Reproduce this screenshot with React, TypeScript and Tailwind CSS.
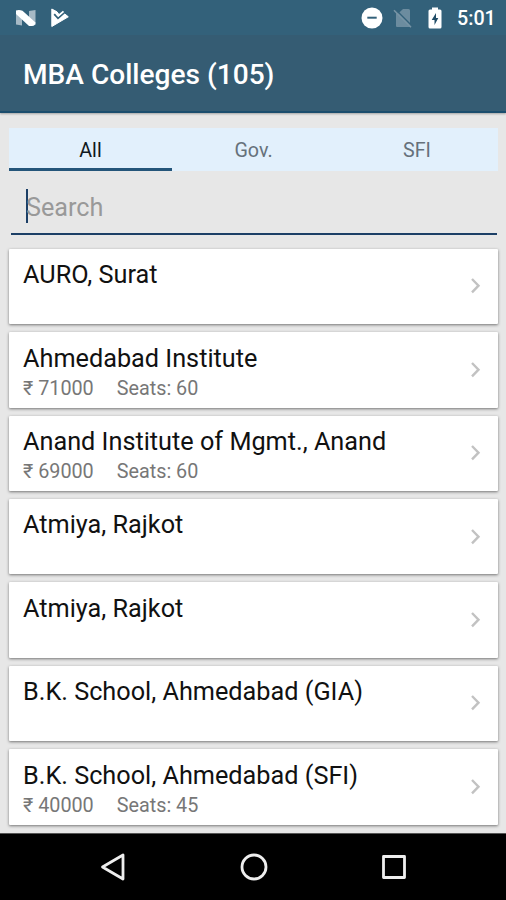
type College = { name: string; fee?: string; seats?: string };

const colleges: College[] = [
  { name: 'AURO, Surat' },
  { name: 'Ahmedabad Institute', fee: '71000', seats: '60' },
  { name: 'Anand Institute of Mgmt., Anand', fee: '69000', seats: '60' },
  { name: 'Atmiya, Rajkot' },
  { name: 'Atmiya, Rajkot' },
  { name: 'B.K. School, Ahmedabad (GIA)' },
  { name: 'B.K. School, Ahmedabad (SFI)', fee: '40000', seats: '45' },
];

function StatusBar() {
  return (
    <div className="flex h-[35px] items-center bg-[#33617a] pr-[10px] pl-[15px] text-white">
      <svg width="22" height="18" viewBox="0 0 22 18">
        <path d="M1 1.5L7 6V16.5L1 15.5ZM14 2L20.5 1V16L14 11Z" fill="#a6b9c5" />
        <path d="M1 1.5Q4 .2 7.5 1.8L20.5 13.5Q20.5 16.8 17 17H14L1 5Z" fill="#fff" />
      </svg>
      <svg className="ml-[13px]" width="20" height="20" viewBox="0 0 20 20">
        <path d="M1.8 1L7 3.8L9.2 6.8L13 4.5L18.3 8.8L1.8 18.5Z" fill="#fff" stroke="#fff" strokeWidth="1" strokeLinejoin="round" />
        <path d="M4.2 6.2L8 10.2L15.5 3.5" fill="none" stroke="#33617a" strokeWidth="1.8" />
        <path d="M6.5 5.8L8.4 7.8L13.5 3.4" fill="none" stroke="#fff" strokeWidth="1.8" />
      </svg>
      <svg className="ml-auto" width="22" height="22" viewBox="0 0 22 22">
        <circle cx="11" cy="11" r="10.5" fill="#fff" />
        <path d="M6.3 10.7H15.7" stroke="#33617a" strokeWidth="2" />
      </svg>
      <svg className="ml-[10px]" width="20" height="20" viewBox="0 0 20 20">
        <path d="M5 5.8L10 1H15.5Q17 1 17 2.5V17L18 18.2L17 19H4Q3 19 3 18V5Z" fill="#6c8c9f" />
        <path d="M2.3 1.2L19 18" stroke="#33617a" strokeWidth="1.5" />
        <path d="M1 2.2L18 19.2" stroke="#7794a5" strokeWidth="1.6" />
      </svg>
      <svg className="ml-[15px]" width="14" height="22" viewBox="0 0 14 22">
        <path d="M4 .5H10V2.5H12Q13.5 2.5 13.5 4V20Q13.5 21.5 12 21.5H2Q.5 21.5 .5 20V4Q.5 2.5 2 2.5H4Z" fill="#fff" />
        <path d="M8 6L3.7 13H6.5V18L10.3 11H8Z" fill="#204c67" />
      </svg>
      <span className="ml-[15px] w-[39px] pt-[2px] text-[19.7px] leading-none font-medium whitespace-nowrap">5:01</span>
    </div>
  );
}

function Tabs() {
  return (
    <div className="mt-[15px] mr-[8px] ml-[9px] grid h-[43px] grid-cols-3 grid-rows-[43px] bg-[#e2f0fc] text-center text-[19.7px] leading-[46px] text-[#66717b]">
      <div className="border-b-[3px] border-[#24557a] text-[#101820]">All</div>
      <div>Gov.</div>
      <div className="pl-px">SFI</div>
    </div>
  );
}

function CollegeCard({ name, fee, seats }: College) {
  return (
    <li className="flex h-[75.4px] items-center justify-between rounded-[1px] bg-white pr-[17px] pl-[14px] shadow-[0_1px_3px_rgba(0,0,0,0.5)]">
      <div className="h-full pt-[9.4px] whitespace-nowrap">
        <div className="text-[25.25px] leading-[34px] text-[#111]">{name}</div>
        {fee && (
          <div className="flex gap-[23px] pt-[0.5px] text-[19.8px] leading-[26px] text-[#777]">
            <span>₹ {fee}</span>
            <span>Seats: {seats}</span>
          </div>
        )}
      </div>
      <svg width="11" height="18" viewBox="0 0 11 18" fill="none" stroke="#c2c2c2" strokeWidth="2.4">
        <path d="M2 2L8.5 8.7L2 15.4" />
      </svg>
    </li>
  );
}

export default function App() {
  return (
    <div className="flex h-[900px] w-[506px] flex-col overflow-hidden bg-[#e7e7e7] font-['Roboto','Noto_Sans',sans-serif]">
      <header className="h-[113px] shrink-0 border-b-2 border-[#1b4d6d] bg-[#355c73] shadow-[0_1px_2px_rgba(0,0,0,0.3)]">
        <StatusBar />
        <h1 className="pt-[20px] pl-[23px] text-[28.1px] leading-[40px] font-medium whitespace-nowrap text-white">MBA Colleges (105)</h1>
      </header>
      <Tabs />
      <div className="mr-[9px] ml-[11px] flex h-[63.5px] items-center border-b-2 border-[#1c3f66] pl-[15px] text-[25.2px] text-[#999]">
        <span className="mt-[9px] h-[34px] w-[2px] bg-[#1c3f66]" />
        <span className="mt-[13px] -ml-[2px] leading-[34px]">Search</span>
      </div>
      <ul className="mt-[14.3px] flex flex-1 flex-col gap-[8px] pr-[8px] pl-[9px]">
        {colleges.map((college, index) => (
          <CollegeCard key={index} {...college} />
        ))}
      </ul>
      <nav className="flex h-[67px] shrink-0 items-center justify-between border-t border-[#555] bg-black pr-[98px] pl-[99px]">
        <svg width="28" height="30" viewBox="0 0 28 30" fill="none" stroke="#eee" strokeWidth="2.8" strokeLinejoin="round">
          <path d="M3.5 15L24 3V27Z" />
        </svg>
        <svg width="28" height="28" viewBox="0 0 28 28" fill="none" stroke="#eee" strokeWidth="2.8">
          <circle cx="14" cy="14" r="12" />
        </svg>
        <svg width="28" height="28" viewBox="0 0 28 28" fill="none" stroke="#eee" strokeWidth="2.8" strokeLinejoin="round">
          <path d="M3.5 3.5H24.5V24.5H3.5Z" />
        </svg>
      </nav>
    </div>
  );
}
